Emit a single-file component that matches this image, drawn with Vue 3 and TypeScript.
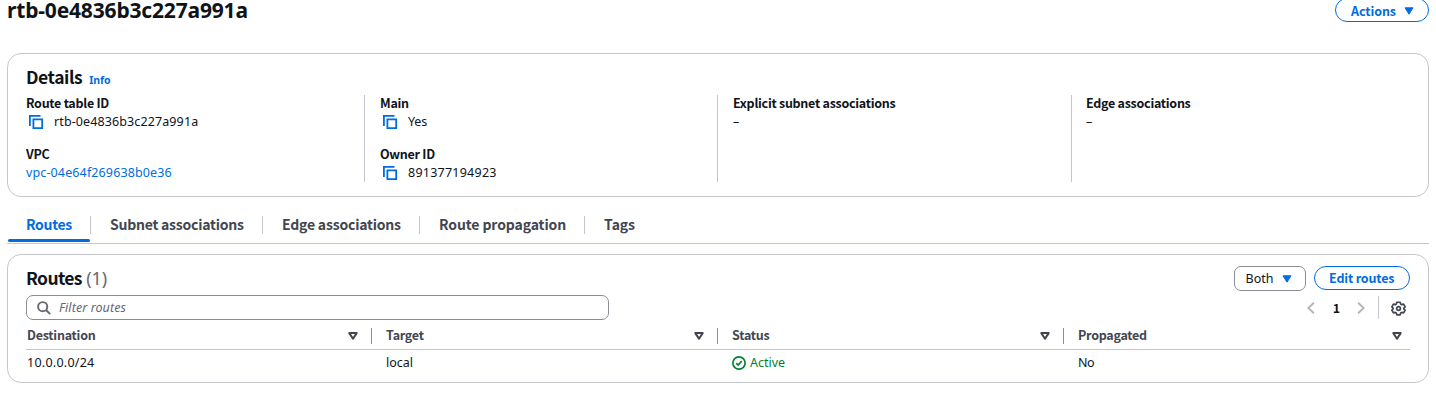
<script setup lang="ts">
interface Field {
  label: string
  value: string
  kind: 'copy' | 'link' | 'text'
  fit: string
}

const routeTableId = 'rtb-0e4836b3c227a991a'

const groups: Field[][] = [
  [
    { label: 'Route table ID', value: routeTableId, kind: 'copy', fit: 'id' },
    { label: 'VPC', value: 'vpc-04e64f269638b0e36', kind: 'link', fit: 'id' },
  ],
  [
    { label: 'Main', value: 'Yes', kind: 'copy', fit: 'word' },
    { label: 'Owner ID', value: '891377194923', kind: 'copy', fit: 'digits' },
  ],
  [{ label: 'Explicit subnet associations', value: '–', kind: 'text', fit: 'word' }],
  [{ label: 'Edge associations', value: '–', kind: 'text', fit: 'word' }],
]

const tabs = [
  { label: 'Routes', cls: 'tab-routes active' },
  { label: 'Subnet associations', cls: 'tab-subnet' },
  { label: 'Edge associations', cls: 'tab-edge' },
  { label: 'Route propagation', cls: 'tab-prop' },
  { label: 'Tags', cls: 'tab-tags' },
]

const columns = ['Destination', 'Target', 'Status', 'Propagated']
const routes = [{ destination: '10.0.0.0/24', target: 'local', status: 'Active', propagated: 'No' }]
</script>

<template>
  <main class="page">
    <header class="title-row">
      <h1>{{ routeTableId }}</h1>
      <button class="btn actions">
        <span>Actions</span>
        <svg class="caret" viewBox="0 0 10 8"><path d="M1 .8h8L5 7.2z" /></svg>
      </button>
    </header>

    <section class="card details">
      <div class="details-head">
        <h2>Details</h2>
        <a class="info">Info</a>
      </div>
      <div class="groups">
        <div v-for="(group, i) in groups" :key="i" class="group">
          <div v-for="f in group" :key="f.label" class="field">
            <div class="label">{{ f.label }}</div>
            <div class="value" :class="[f.kind, f.fit]">
              <svg v-if="f.kind === 'copy'" class="copy-icon" viewBox="0 0 16 16">
                <path d="M1.9 12V1.9H12.5M5.4 5.4h8.8v8.8H5.4z" />
              </svg>
              <span>{{ f.value }}</span>
            </div>
          </div>
        </div>
      </div>
    </section>

    <nav class="tabs">
      <a v-for="t in tabs" :key="t.label" class="tab" :class="t.cls">
        <span>{{ t.label }}</span>
      </a>
    </nav>

    <section class="card routes">
      <div class="routes-head">
        <h2>Routes <span class="count">(1)</span></h2>
        <div class="buttons">
          <button class="select">
            <span>Both</span>
            <svg class="caret" viewBox="0 0 10 8"><path d="M1 .8h8L5 7.2z" /></svg>
          </button>
          <button class="btn edit"><span>Edit routes</span></button>
        </div>
      </div>

      <div class="tools">
        <div class="search">
          <svg class="search-icon" viewBox="0 0 14 14">
            <circle cx="5.7" cy="5.7" r="4.6" /><path d="M9 9l4.2 4.2" />
          </svg>
          <span>Filter routes</span>
        </div>
        <div class="pager">
          <svg class="arrow" viewBox="0 0 8 12"><path d="M6.9 .7L1.3 6l5.6 5.3" /></svg>
          <span class="page-no">1</span>
          <svg class="arrow" viewBox="0 0 8 12"><path d="M1.1 .7L6.7 6l-5.6 5.3" /></svg>
          <span class="rule"></span>
          <svg class="gear" viewBox="0 0 16 16">
            <path d="M6.2 1.3h3.6l.5 1.9 1.2.7 1.9-.6 1.7 3-1.4 1.4v.7l1.4 1.3-1.7 3-1.9-.5-1.2.7-.5 1.8H6.2l-.5-1.8-1.2-.7-1.9.5-1.7-3 1.4-1.3v-.7L.9 6.3l1.7-3 1.9.6 1.2-.7z" />
            <circle cx="8" cy="8" r="2" />
          </svg>
        </div>
      </div>

      <div class="row head">
        <div v-for="c in columns" :key="c" class="th">
          <span>{{ c }}</span>
          <svg class="sort" viewBox="0 0 10 8"><path d="M1.3 1.1h7.4L5 6.7z" /></svg>
        </div>
      </div>
      <div v-for="r in routes" :key="r.destination" class="row body">
        <div class="td cidr">{{ r.destination }}</div>
        <div class="td">{{ r.target }}</div>
        <div class="td status">
          <svg class="ok" viewBox="0 0 16 16">
            <circle cx="8" cy="8" r="7" /><path d="M4.8 8.2l2.3 2.2 4-4.6" />
          </svg>
          <span>{{ r.status }}</span>
        </div>
        <div class="td no">{{ r.propagated }}</div>
      </div>
    </section>
  </main>
</template>

<style>
html,
body {
  margin: 0;
  background: #fff;
  overflow: hidden;
}
</style>

<style scoped>
.page {
  --bold: "Noto Sans CJK JP", "Noto Sans", sans-serif;
  --blue: #006ce0;
  box-sizing: border-box;
  width: 1436px;
  height: 401px;
  padding: 0 7px;
  color: #0f141a;
  font: 12.5px/18px "Noto Sans", "Open Sans", sans-serif;
  white-space: nowrap;
}
.page * {
  box-sizing: border-box;
}
svg {
  display: block;
  flex: none;
  fill: none;
}
button {
  display: flex;
  align-items: center;
  padding: 0;
  background: #fff;
  font: inherit;
}
h1,
h2 {
  margin: 0;
}
.title-row {
  display: flex;
  justify-content: space-between;
  height: 53px;
}
h1 {
  font-size: 21px;
  line-height: 20px;
  letter-spacing: -0.17px;
}
.btn {
  height: 24px;
  border: 1.5px solid var(--blue);
  border-radius: 12px;
  color: var(--blue);
  font-family: var(--bold);
  font-weight: 700;
}
.caret {
  width: 10px;
  height: 8px;
  fill: var(--blue);
  stroke: var(--blue);
  stroke-linejoin: round;
}
.actions {
  width: 94px;
  margin-top: -2px;
  padding: 1px 0 0 15px;
  gap: 8px;
  letter-spacing: -0.08px;
}
.card {
  width: 1422px;
  border: 1px solid #c6c6cd;
  border-radius: 14px;
}
.details {
  height: 144px;
  padding: 11px 18px 0;
}
.details-head {
  display: flex;
  height: 24px;
}
h2 {
  font: 700 17.5px/24px var(--bold);
  letter-spacing: -0.42px;
}
.info {
  margin: 7px 0 0 7px;
  color: var(--blue);
  font: 700 10.5px/16px "Noto Sans", sans-serif;
  letter-spacing: -0.1px;
}
.groups {
  display: grid;
  grid-template-columns: 338px 353px 354px 1fr;
  height: 87px;
  margin-top: 6px;
}
.group {
  display: flex;
  flex-direction: column;
  gap: 15px;
}
.group + .group {
  padding-left: 15px;
  border-left: 1px solid #c6c6cd;
}
.group:last-child {
  padding-left: 14px;
}
.field:first-child {
  margin-top: -1px;
}
.label {
  font-family: var(--bold);
  font-weight: 700;
  letter-spacing: -0.27px;
}
.value {
  display: flex;
  align-items: center;
  height: 18px;
  padding-top: 2px;
}
.copy-icon {
  width: 16px;
  height: 16px;
  margin: 0 10px 0 2px;
  stroke: var(--blue);
  stroke-width: 1.8;
}
.id {
  letter-spacing: 0.11px;
}
.digits {
  letter-spacing: 0.24px;
}
.word {
  letter-spacing: -0.1px;
}
.link {
  color: var(--blue);
  letter-spacing: 0.13px;
}
.tabs {
  display: flex;
  height: 47px;
  padding: 17px 0 0 1px;
  border-bottom: 1px solid #c6c6cd;
}
.tab {
  position: relative;
  height: 29px;
  padding-left: 20px;
  color: #424650;
  font: 700 14px/20px var(--bold);
  letter-spacing: -0.2px;
}
.tab + .tab::before {
  content: "";
  position: absolute;
  left: 0;
  top: 2px;
  width: 1px;
  height: 18px;
  background: #c6c6cd;
}
.tab-routes {
  width: 82px;
  padding-left: 18px;
}
.tab-subnet {
  width: 172px;
  letter-spacing: -0.23px;
}
.tab-edge {
  width: 157px;
}
.tab-prop {
  width: 165px;
  letter-spacing: -0.1px;
}
.tab-tags {
  letter-spacing: -0.07px;
}
.active {
  color: var(--blue);
  letter-spacing: -0.29px;
}
.active::after {
  content: "";
  position: absolute;
  left: 0;
  bottom: 1px;
  width: 82px;
  height: 3px;
  border-radius: 2px;
  background: var(--blue);
}
.routes {
  height: 129px;
  margin-top: 10px;
  padding: 11px 18px 0;
}
.routes-head {
  display: flex;
  justify-content: space-between;
  height: 25px;
}
.routes h2 {
  letter-spacing: -0.65px;
}
.count {
  margin-left: 1px;
  color: #656871;
  font: 18px/24px "Noto Sans", sans-serif;
  letter-spacing: 0;
}
.buttons {
  display: flex;
  gap: 8px;
}
.select {
  width: 72px;
  height: 25px;
  padding: 1px 0 0 10.5px;
  gap: 9px;
  border: 1px solid #8c8c94;
  border-radius: 7px;
  color: #0f141a;
}
.edit {
  width: 96px;
  padding: 0 0 1px 14px;
  letter-spacing: -0.16px;
}
.tools {
  display: flex;
  justify-content: space-between;
  height: 25px;
  margin-top: 4px;
}
.search {
  display: flex;
  align-items: center;
  width: 583px;
  padding-left: 10px;
  gap: 9px;
  border: 1px solid #8c8c94;
  border-radius: 7px;
  color: #656871;
  font-style: italic;
  letter-spacing: 0.09px;
}
.search-icon {
  width: 14px;
  height: 14px;
  margin-right: -1px;
  stroke: #656871;
  stroke-width: 1.9;
}
.pager {
  display: flex;
  align-items: center;
  padding-right: 4px;
}
.arrow {
  width: 8px;
  height: 12px;
  margin-top: 1px;
  stroke: #b4b4bb;
  stroke-width: 1.9;
}
.page-no {
  width: 42px;
  padding-left: 1px;
  text-align: center;
  font-family: var(--bold);
  font-weight: 700;
}
.rule {
  width: 1px;
  height: 23px;
  margin: 0 12px 0 13px;
  background: #c6c6cd;
}
.gear {
  width: 15px;
  height: 15px;
  margin-top: 1px;
  stroke: #424650;
  stroke-width: 1.8;
  stroke-linejoin: round;
}
.row {
  display: grid;
  grid-template-columns: repeat(4, 346px);
}
.head {
  height: 28px;
  margin-top: 2px;
  border-bottom: 1px solid #c6c6cd;
  color: #424650;
  font-family: var(--bold);
  font-weight: 700;
  letter-spacing: -0.25px;
}
.th {
  position: relative;
  display: flex;
  align-items: center;
  justify-content: space-between;
  padding: 0 14px 1px;
}
.th:first-child {
  padding-left: 1px;
}
.th:last-child {
  padding-right: 8px;
}
.th + .th::before {
  content: "";
  position: absolute;
  left: -1px;
  top: 6px;
  width: 1px;
  height: 16px;
  background: #8c8c94;
}
.sort {
  width: 10px;
  height: 8px;
  margin-top: 1px;
  stroke: #424650;
  stroke-width: 2;
  stroke-linejoin: round;
}
.body {
  padding-top: 4px;
}
.td {
  padding-left: 14px;
}
.td.cidr {
  padding-left: 1px;
  letter-spacing: 0.25px;
}
.td.no {
  letter-spacing: -0.5px;
}
.status {
  display: flex;
  align-items: center;
  gap: 4px;
  color: #00802f;
}
.ok {
  width: 14px;
  height: 14px;
  stroke: #00802f;
  stroke-width: 1.9;
}
</style>
